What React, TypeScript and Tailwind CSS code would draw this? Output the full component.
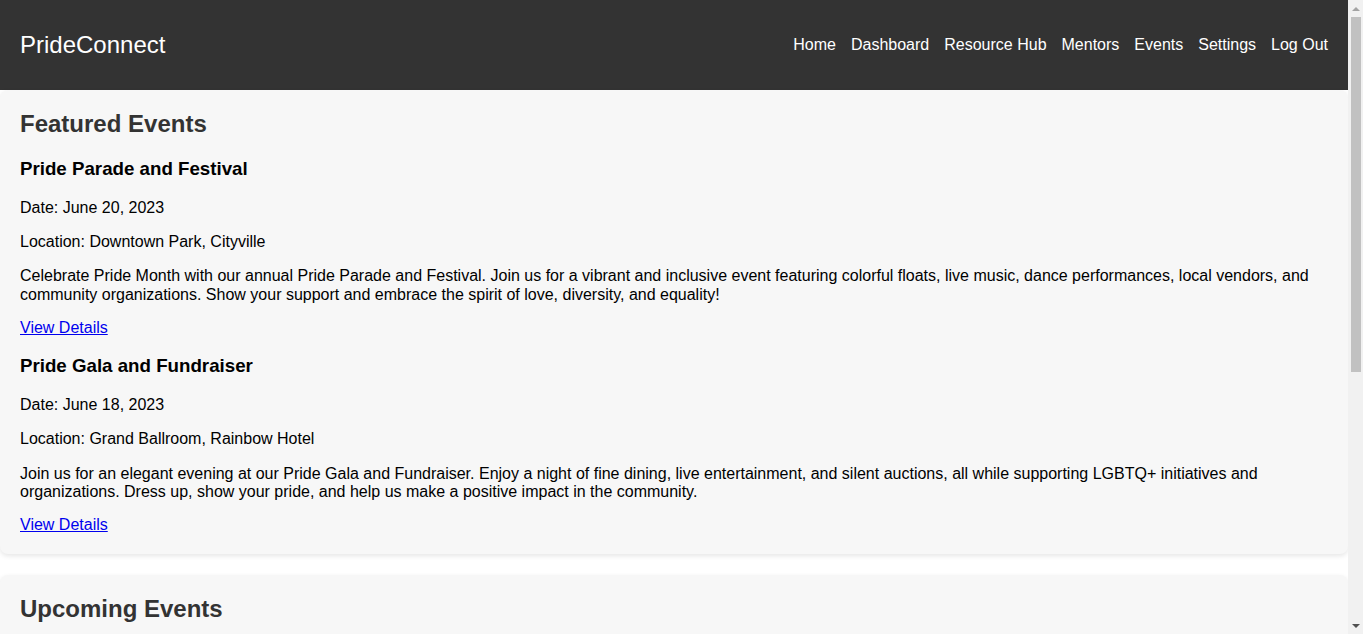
import React from "react";

interface EventItem {
  title: string;
  date: string;
  location: string;
  description: string;
}

const featured: EventItem[] = [
  {
    title: "Pride Parade and Festival",
    date: "June 20, 2023",
    location: "Downtown Park, Cityville",
    description:
      "Celebrate Pride Month with our annual Pride Parade and Festival. Join us for a vibrant and inclusive event featuring colorful floats, live music, dance performances, local vendors, and community organizations. Show your support and embrace the spirit of love, diversity, and equality!",
  },
  {
    title: "Pride Gala and Fundraiser",
    date: "June 18, 2023",
    location: "Grand Ballroom, Rainbow Hotel",
    description:
      "Join us for an elegant evening at our Pride Gala and Fundraiser. Enjoy a night of fine dining, live entertainment, and silent auctions, all while supporting LGBTQ+ initiatives and organizations. Dress up, show your pride, and help us make a positive impact in the community.",
  },
];

const upcoming: EventItem[] = [
  {
    title: "Queer Film Night",
    date: "July 7, 2023",
    location: "Community Center, Cityville",
    description:
      "Grab some popcorn and join us for a screening of award-winning LGBTQ+ films, followed by a discussion with local filmmakers.",
  },
];

const navLinks = ["Home", "Dashboard", "Resource Hub", "Mentors", "Events", "Settings", "Log Out"];

function EventSection({ heading, events }: { heading: string; events: EventItem[] }) {
  return (
    <section className="mb-[21px] rounded-lg bg-[#f7f7f7] p-5 shadow-[0_2px_5px_rgba(0,0,0,0.1)]">
      <h2 className="mb-5 text-[24px] font-bold leading-[27.6px] text-[#333]">{heading}</h2>
      <div className="flex flex-col gap-[17.7px]">
        {events.map((ev) => (
          <div key={ev.title}>
            <h3 className="mb-[19.5px] text-[18.72px] font-bold leading-[21.5px] text-black">
              {ev.title}
            </h3>
            <p className="mb-4">Date: {ev.date}</p>
            <p className="mb-4">Location: {ev.location}</p>
            <p className="mb-[14.5px]">{ev.description}</p>
            <a href="#" className="text-[#0000ee] underline">
              View Details
            </a>
          </div>
        ))}
      </div>
    </section>
  );
}

// fake classic scrollbar, the reference shows one
function Scrollbar() {
  return (
    <div className="flex w-[15px] shrink-0 flex-col items-center bg-[#f1f1f1]">
      <div className="flex h-[17px] items-center justify-center">
        <div className="h-0 w-0 border-x-[4px] border-b-[4px] border-x-transparent border-b-[#a3a3a3]" />
      </div>
      <div className="h-[355px] w-[10px] bg-[#c1c1c1]" />
      <div className="flex-1" />
      <div className="flex h-[17px] items-center justify-center">
        <div className="h-0 w-0 border-x-[4px] border-t-[4px] border-x-transparent border-t-[#505050]" />
      </div>
    </div>
  );
}

export default function App() {
  return (
    <div className="flex h-screen overflow-hidden bg-white text-[16px] leading-[1.15] text-black [font-family:'Liberation_Sans',Arial,sans-serif]">
      <div className="min-w-0 flex-1">
        {/* Header */}
        <header className="flex h-[90px] items-center justify-between bg-[#333] px-5 text-white">
          <h1 className="text-[24px] font-normal leading-[27.6px]">PrideConnect</h1>
          <nav className="flex gap-[15px]">
            {navLinks.map((l) => (
              <a key={l} href="#" className="text-white">
                {l}
              </a>
            ))}
          </nav>
        </header>

        <main>
          <EventSection heading="Featured Events" events={featured} />
          <EventSection heading="Upcoming Events" events={upcoming} />
        </main>
      </div>
      <Scrollbar />
    </div>
  );
}
